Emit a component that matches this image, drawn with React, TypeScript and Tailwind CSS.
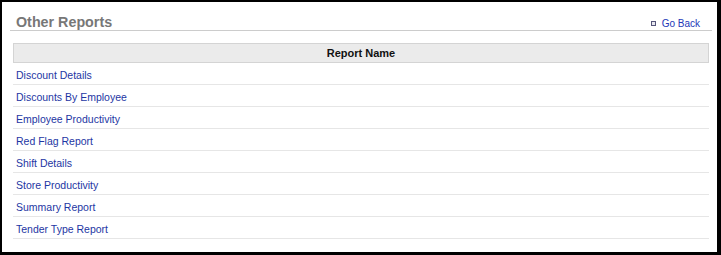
export default function App() {
  const reports = [
    'Discount Details',
    'Discounts By Employee',
    'Employee Productivity',
    'Red Flag Report',
    'Shift Details',
    'Store Productivity',
    'Summary Report',
    'Tender Type Report',
  ];

  return (
    <div className="w-[721px] h-[255px] border-l-2 border-t-2 border-r-4 border-b-[3px] border-black bg-white font-['Liberation_Sans',Arial,sans-serif]">
      <div className="ml-2 mr-[5px] h-[29px] pt-3 flex items-baseline justify-between border-b border-[#cccccc]">
        <h1 className="pl-[6px] text-[14.3px] font-bold leading-4 text-[#777777]">Other Reports</h1>
        <a className="mr-3 flex items-baseline text-[10px] text-[#2338b8]">
          <span className="mr-[6px] inline-block w-[5px] h-[5px] -translate-y-[1px] border border-[#55557a] bg-[#e8e8f0]" />
          Go Back
        </a>
      </div>

      <div className="mt-3 ml-[11px] mr-2">
        <div className="h-5 border border-[#d4d4d4] bg-[#ebebeb] text-center text-[11px] font-bold leading-[18px] text-[#111111]">
          Report Name
        </div>
        {reports.map((name) => (
          <div
            key={name}
            className="h-[22px] pt-[3px] pl-[3px] border-b border-[#e6e6e6] text-[10.5px] leading-[18px] text-[#1d36a3]"
          >
            <a>{name}</a>
          </div>
        ))}
      </div>
    </div>
  );
}
